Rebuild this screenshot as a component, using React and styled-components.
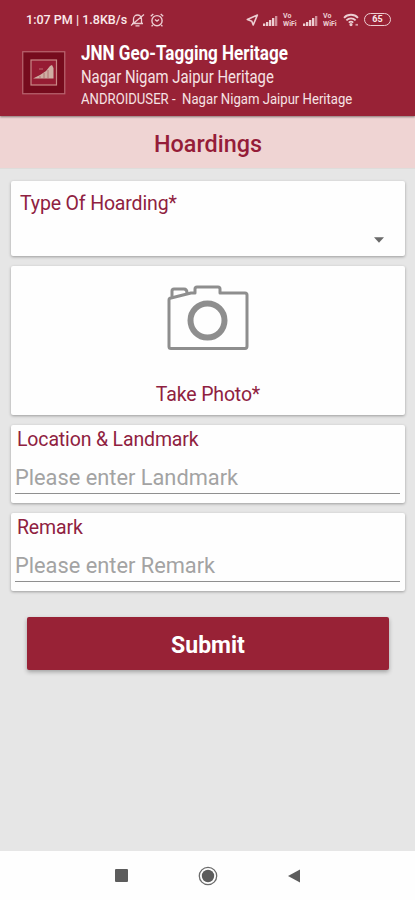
import React from "react";
import styled, { createGlobalStyle } from "styled-components";

const Global = createGlobalStyle`
  * { box-sizing: border-box; }
  body { margin: 0; background: #e6e6e6; font-family: Roboto, sans-serif; }
`;

const Screen = styled.main`
  display: flex;
  flex-direction: column;
  width: 415px;
  height: 900px;
  overflow: hidden;
  background: #e6e6e6;
`;

const Header = styled.header`
  flex: none;
  height: 116px;
  background: #982236;
  color: #fbe9ea;
  box-shadow: 0 1px 2px rgba(0, 0, 0, 0.45);
  z-index: 1;
`;

const StatusBar = styled.div`
  display: flex;
  align-items: center;
  justify-content: space-between;
  height: 39px;
  padding: 0 24px 0 26px;
`;

const StatusGroup = styled.div`
  display: flex;
  align-items: center;
`;

const StatusText = styled.span`
  width: 103px;
  font-size: 13px;
  font-weight: 500;
  line-height: 16px;
  white-space: pre;
`;

const Squeeze = styled.span`
  display: inline-block;
  white-space: pre;
  transform: scaleX(${(p) => p.$x});
  transform-origin: left center;
`;

const Brand = styled.div`
  display: flex;
  gap: 15px;
  padding-left: 22px;
`;

const Logo = styled.svg`
  flex: none;
  margin-top: 12px;
`;

const BrandText = styled.div`
  display: flex;
  flex-direction: column;
  padding-top: 3px;
`;

const BrandLine = styled.div`
  height: ${(p) => p.$h}px;
  line-height: ${(p) => p.$h}px;
  font-size: ${(p) => p.$size}px;
  font-weight: ${(p) => p.$weight || 400};
  color: ${(p) => p.$color || "#f6e2e4"};
  white-space: nowrap;
`;

const TitleBar = styled.h1`
  flex: none;
  display: flex;
  align-items: center;
  justify-content: center;
  height: 53px;
  margin: 0;
  padding: 3px 0 0 1px;
  background: #efd4d3;
  border-bottom: 1px solid #dedddb;
  color: #951c38;
  font-size: 23.4px;
  font-weight: 500;
`;

const Form = styled.form`
  flex: 1;
  display: flex;
  flex-direction: column;
  gap: 10px;
  padding: 12px 10px 0 11px;
`;

const Card = styled.section`
  display: flex;
  flex-direction: column;
  height: ${(p) => p.$h}px;
  background: #fefefe;
  border-radius: 2px;
  box-shadow: 0 1px 3px rgba(0, 0, 0, 0.32);
`;

const SelectCard = styled(Card)`
  justify-content: space-between;
  padding: 11px 21px 13px 9px;
`;

const PhotoCard = styled(Card)`
  align-items: center;
  padding: 19px 0 0;
`;

const InputCard = styled(Card)`
  padding: 3px 5px 0 4px;
`;

const Label = styled.label`
  display: block;
  height: 24px;
  line-height: 24px;
  font-size: 19.5px;
  letter-spacing: -0.15px;
  color: #8f2140;
  padding-left: ${(p) => p.$pad || 0}px;
  white-space: nowrap;
`;

const PhotoLabel = styled(Label)`
  margin-top: 32px;
`;

const Arrow = styled.svg`
  align-self: flex-end;
`;

const Input = styled.input`
  width: 100%;
  height: 32px;
  margin-top: 10px;
  padding: 0;
  border: 0;
  border-bottom: 1px solid #8f8f8f;
  border-radius: 0;
  outline: 0;
  background: transparent;
  font: 400 21.8px/28px Roboto, sans-serif;
  &::placeholder { color: #a3a3a3; opacity: 1; }
`;

const Submit = styled.button`
  flex: none;
  height: 53px;
  margin: 16px 16px 0 16px;
  padding: 3px 0 0;
  border: 0;
  border-radius: 2px;
  background: #982236;
  color: #fff;
  font: 700 23px Roboto, sans-serif;
  box-shadow: 0 2px 4px rgba(0, 0, 0, 0.3);
`;

const NavBar = styled.nav`
  flex: none;
  display: flex;
  justify-content: center;
  align-items: center;
  gap: 70px;
  height: 49px;
  background: #fefefe;
`;

const Signal = () => (
  <svg width="16" height="12" viewBox="0 0 16 12" fill="#eccdd1">
    <rect x="0" y="9.500" width="2.300" height="2.500" />
    <rect x="3" y="8" width="2.300" height="4" />
    <rect x="6" y="6" width="2.300" height="6" />
    <rect x="9" y="4" width="2.300" height="8" />
    <rect x="12" y="2" width="2.300" height="10" opacity=".65" />
  </svg>
);

const VoStack = styled.span`
  display: flex;
  flex-direction: column;
  align-items: flex-start;
  width: 16px;
  margin: 0 4px;
  font-size: 7px;
  font-weight: 700;
  color: #eccdd1;
`;

const VoLine = styled.span`
  height: 8px;
  line-height: 8px;
`;

const Vo = () => (
  <VoStack>
    <VoLine>Vo</VoLine>
    <VoLine>WiFi</VoLine>
  </VoStack>
);

const MutedBell = () => (
  <svg width="15" height="16" viewBox="0 0 15 16" fill="none" stroke="#eccdd1" strokeWidth="1.3">
    <path d="M2 11.500h11M3.500 11V7a4 4 0 0 1 8 0v4M5.500 13.800h4M1 13.500 14 2.500" />
  </svg>
);

const Alarm = () => (
  <svg width="16" height="16" viewBox="0 0 16 16" fill="none" stroke="#eccdd1" strokeWidth="1.4">
    <circle cx="8" cy="8.700" r="5.100" />
    <path d="M1.800 4.200 4.300 2M14.200 4.200 11.700 2M3.800 13l-1.200 1.400M12.200 13l1.200 1.400M6 7.500l2 1.700 2-1.700" />
  </svg>
);

const Gap = styled.span`
  width: ${(p) => p.$w}px;
`;

const Battery = styled.span`
  display: flex;
  align-items: center;
  justify-content: center;
  width: 27px;
  height: 13px;
  margin-left: 4px;
  border: 1.5px solid #eccdd1;
  border-radius: 7px;
  font-size: 9px;
  font-weight: 700;
  line-height: 11px;
`;

export default function App() {
  return (
    <>
      <Global />
      <Screen>
        <Header>
          <StatusBar>
            <StatusGroup>
              <StatusText><Squeeze $x={0.965}>1:07 PM | 1.8KB/s</Squeeze></StatusText>
              <Gap $w={1} />
              <MutedBell />
              <Gap $w={4} />
              <Alarm />
            </StatusGroup>
            <StatusGroup>
              <svg width="13" height="14" viewBox="0 0 13 14" fill="none" stroke="#eccdd1" strokeWidth="1.600" strokeLinejoin="round">
                <path d="M1.300 6.500 11.400 2 7.200 12 5.800 8.200Z" />
              </svg>
              <Gap $w={4} />
              <Signal />
              <Vo />
              <Signal />
              <Vo />
              <svg width="17" height="14" viewBox="0 0 17 14" fill="none" stroke="#eccdd1" strokeWidth="1.800">
                <path d="M1 4.800a9.600 9.600 0 0 1 14 0M3.400 7.300a6.400 6.400 0 0 1 9.200 0M5.800 9.700a3.200 3.200 0 0 1 4.400 0" />
                <circle cx="8" cy="11.600" r=".7" fill="#eccdd1" />
                <path d="M12.500 11.800h2.500" opacity=".7" />
              </svg>
              <Battery>65</Battery>
            </StatusGroup>
          </StatusBar>
          <Brand>
            <Logo width="44" height="44" viewBox="0 0 44 44">
              <rect x=".75" y=".75" width="42" height="42" fill="#760b1d" stroke="#b96570" strokeWidth="1.2" />
              <rect x="9" y="9" width="25.5" height="25" fill="#961c33" stroke="#c98786" strokeWidth="1.2" />
              <path d="M11 27.5 18 24l6-4 4-5 2-1 1.5 3v10.5Z" fill="#cfaea3" />
              <path d="M18 25v2.5M22 22v5.500M26 19v8.500" stroke="#a66465" strokeWidth=".8" />
              <path d="M17 18h4" stroke="#bd6a73" />
            </Logo>
            <BrandText>
              <BrandLine $h={24} $size={19.5} $weight={700} $color="#ffffff"><Squeeze $x={0.875}>JNN Geo-Tagging Heritage</Squeeze></BrandLine>
              <BrandLine $h={23} $size={17.5}><Squeeze $x={0.85}>Nagar Nigam Jaipur Heritage</Squeeze></BrandLine>
              <BrandLine $h={20} $size={15.5}><Squeeze $x={0.847}>ANDROIDUSER -  Nagar Nigam Jaipur Heritage</Squeeze></BrandLine>
            </BrandText>
          </Brand>
        </Header>
        <TitleBar>Hoardings</TitleBar>
        <Form>
          <SelectCard $h={75}>
            <Label>Type Of Hoarding*</Label>
            <Arrow width="10" height="6" viewBox="0 0 10 6"><path d="M0 .3h10L5 5.700Z" fill="#6a6a6a" /></Arrow>
          </SelectCard>
          <PhotoCard $h={149}>
            <svg width="82" height="66" viewBox="0 0 82 66" fill="none" stroke="#8e8e8e" strokeWidth="3" strokeLinejoin="round">
              <path d="M4 13 24 8h4V4q0-2 2-2h21q2 0 2 2v4h25q2 0 2 2v51q0 2.500-2 2.500H4q-2 0-2-2V15q0-2 2-2Z" />
              <path d="M5 12V6q0-2 2-2h10q3 0 3 4" />
              <circle cx="40.500" cy="35.500" r="17" strokeWidth="6" />
            </svg>
            <PhotoLabel>Take Photo*</PhotoLabel>
          </PhotoCard>
          <InputCard $h={78}>
            <Label $pad={2}>Location &amp; Landmark</Label>
            <Input placeholder="Please enter Landmark" />
          </InputCard>
          <InputCard $h={78}>
            <Label $pad={2}>Remark</Label>
            <Input placeholder="Please enter Remark" />
          </InputCard>
          <Submit type="button">Submit</Submit>
        </Form>
        <NavBar>
          <svg width="13" height="13" viewBox="0 0 13 13"><rect width="13" height="13" rx="1" fill="#5c5c5c" /></svg>
          <svg width="20" height="20" viewBox="0 0 20 20"><circle cx="10" cy="10" r="8.700" fill="none" stroke="#6b6b6b" strokeWidth="1.300" /><circle cx="10" cy="10" r="6.200" fill="#5c5c5c" /></svg>
          <svg width="13" height="14" viewBox="0 0 13 14"><path d="M0 7 12 .5v13Z" fill="#5c5c5c" /></svg>
        </NavBar>
      </Screen>
    </>
  );
}
